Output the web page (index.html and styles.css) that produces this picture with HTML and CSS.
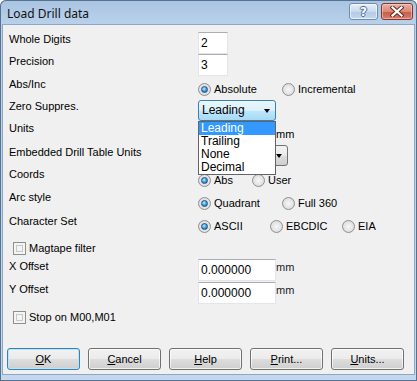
FILE: index.html
```html
<!DOCTYPE html>
<html lang="en">
<head>
    <meta charset="UTF-8">
    <title>Load Drill data</title>
    <link rel="stylesheet" href="styles.css">
</head>
<body>
    <div class="window">
        <div class="titlebar">
            <span class="title">Load Drill data</span>
            <div class="caption-btns">
                <div class="cap help">?</div>
                <div class="cap close">
                    <svg width="14" height="11" viewBox="0 0 14 11">
                        <path d="M2.5 1.5 L11.5 9.5 M11.5 1.5 L2.5 9.5" stroke="#5a2a22" stroke-width="4" stroke-linecap="square"/>
                        <path d="M2.5 1.5 L11.5 9.5 M11.5 1.5 L2.5 9.5" stroke="#fff" stroke-width="2.2" stroke-linecap="square"/>
                    </svg>
                </div>
            </div>
        </div>

        <div class="client">
            <div class="form">
                <div class="row r1">
                    <div class="lbl">Whole Digits</div>
                    <div class="tb small">2</div>
                </div>
                <div class="row r2">
                    <div class="lbl">Precision</div>
                    <div class="tb small">3</div>
                </div>
                <div class="row r3">
                    <div class="lbl">Abs/Inc</div>
                    <div class="opts">
                        <label class="opt w84"><span class="radio on"></span>Absolute</label>
                        <label class="opt"><span class="radio"></span>Incremental</label>
                    </div>
                </div>
                <div class="row r4">
                    <div class="lbl">Zero Suppres.</div>
                    <div class="combo focus">
                        <span>Leading</span>
                        <span class="arrow"></span>
                        <div class="droplist">
                            <div class="item sel">Leading</div>
                            <div class="item">Trailing</div>
                            <div class="item">None</div>
                            <div class="item">Decimal</div>
                        </div>
                    </div>
                </div>
                <div class="row r5">
                    <div class="lbl">Units</div>
                    <div class="opts shifted">
                        <label class="opt"><span class="radio"></span>mm</label>
                    </div>
                </div>
                <div class="row r6">
                    <div class="lbl">Embedded Drill Table Units</div>
                    <div class="combo wide">
                        <span class="arrow"></span>
                    </div>
                </div>
                <div class="row r7">
                    <div class="lbl">Coords</div>
                    <div class="opts">
                        <label class="opt w54"><span class="radio on"></span>Abs</label>
                        <label class="opt"><span class="radio"></span>User</label>
                    </div>
                </div>
                <div class="row r8">
                    <div class="lbl">Arc style</div>
                    <div class="opts">
                        <label class="opt w84"><span class="radio on"></span>Quadrant</label>
                        <label class="opt"><span class="radio"></span>Full 360</label>
                    </div>
                </div>
                <div class="row r9">
                    <div class="lbl">Character Set</div>
                    <div class="opts">
                        <label class="opt w72"><span class="radio on"></span>ASCII</label>
                        <label class="opt w72"><span class="radio"></span>EBCDIC</label>
                        <label class="opt"><span class="radio"></span>EIA</label>
                    </div>
                </div>
                <div class="row r10">
                    <label class="chk"><span class="box"></span>Magtape filter</label>
                </div>
                <div class="row r11">
                    <div class="lbl">X Offset</div>
                    <div class="tb offset">0.000000</div>
                    <span class="unit">mm</span>
                </div>
                <div class="row r12">
                    <div class="lbl">Y Offset</div>
                    <div class="tb offset">0.000000</div>
                    <span class="unit">mm</span>
                </div>
                <div class="row r13">
                    <label class="chk"><span class="box"></span>Stop on M00,M01</label>
                </div>
            </div>

            <div class="buttons">
                <div class="btn default"><u>O</u>K</div>
                <div class="btn"><u>C</u>ancel</div>
                <div class="btn"><u>H</u>elp</div>
                <div class="btn"><u>P</u>rint...</div>
                <div class="btn"><u>U</u>nits...</div>
            </div>
        </div>
    </div>
</body>
</html>
```

FILE: styles.css
```css
body {
    margin: 0;
    font-family: "Liberation Sans", Arial, sans-serif;
    font-size: 11px;
    color: #000;
    background: #fff;
}
.window {
    width: 417px;
    height: 381px;
    box-sizing: border-box;
    padding: 0 3px 7px 3px;
    display: flex;
    flex-direction: column;
    background: linear-gradient(#a9c4e2, #bcd3ec 30px, #c3d8ef);
    box-shadow: inset 0 0 0 1px #56728f;
    border-radius: 6px 6px 0 0;
}
.titlebar {
    height: 25px;
    display: flex;
    justify-content: space-between;
    align-items: flex-start;
    padding: 0 1px 0 4px;
}
.title {
    font-family: "Noto Sans", "Open Sans", sans-serif;
    font-size: 12px;
    color: #111;
    margin-top: 5px;
}
.caption-btns {
    display: flex;
    gap: 3px;
    margin-top: 3px;
}
.cap {
    height: 17px;
    box-sizing: border-box;
    border-radius: 3px;
    display: flex;
    align-items: center;
    justify-content: center;
}
.help {
    width: 29px;
    border: 1px solid #6f8cb0;
    background: linear-gradient(#e6eff9, #c9daee 50%, #b2c9e4 51%, #c4d8ef);
    box-shadow: inset 0 0 0 1px rgba(255,255,255,0.6);
    font-family: "DejaVu Sans", sans-serif;
    font-weight: bold;
    font-size: 12px;
    color: #fff;
    text-shadow: 1px 0 #4d6a8e, -1px 0 #4d6a8e, 0 1px #4d6a8e, 0 -1px #4d6a8e;
}
.close {
    width: 32px;
    border: 1px solid #8a3428;
    background: linear-gradient(#eab0a4, #d98777 50%, #c75a48 51%, #d3806e);
    box-shadow: inset 0 0 0 1px rgba(255,220,210,0.5);
}
.client {
    flex: 1;
    background: #f0f0f0;
    display: flex;
    flex-direction: column;
    box-shadow: 0 0 0 1px #8fa6c3;
}
.form {
    padding: 6px 0 0 6px;
}
.row {
    display: flex;
    align-items: flex-start;
}
.lbl {
    width: 189px;
    line-height: 13px;
    white-space: nowrap;
}
.r1 { height: 23px; }
.r2 { height: 23px; }
.r3 { height: 21px; }
.r4 { height: 24px; }
.r5 { height: 20px; }
.r6 { height: 25px; }
.r7 { height: 23px; }
.r8 { height: 24px; }
.r9 { height: 24px; }
.r10 { height: 20px; }
.r11 { height: 23px; }
.r12 { height: 24px; }
.r13 { height: 25px; }

.r1 .lbl { margin-top: 2px; }
.r2 .lbl { margin-top: 1px; }
.r3 .lbl { margin-top: 1px; }
.r4 .lbl { margin-top: 2px; }
.r6 .lbl { margin-top: 4px; }
.r7 .lbl, .r8 .lbl, .r9 .lbl { margin-top: 1px; }
.r11 .lbl, .r12 .lbl { margin-top: 2px; }

.r1 .tb { margin-top: 1px; }
.r3 .opts { margin-top: 6px; }
.r4 .combo { margin-top: 2px; }
.r5 .opts { margin-top: 6px; }
.r6 .combo { margin-top: 3px; }
.r7 .opts, .r8 .opts { margin-top: 7px; }
.r9 .opts { margin-top: 6px; }
.r10 .chk { margin-top: 4px; }
.r11 .tb, .r12 .tb { margin-top: 1px; }
.r13 .chk { margin-top: 6px; }

.tb {
    height: 22px;
    box-sizing: border-box;
    background: #fff;
    border: 1px solid #e3e5ea;
    border-top-color: #abadb3;
    padding: 0 2px;
    line-height: 20px;
    font-size: 12px;
}
.tb.small { width: 30px; }
.tb.offset { width: 78px; }
.unit {
    margin-top: 3px;
    line-height: 13px;
    color: #1a1a2a;
}
.opts {
    display: flex;
}
.opts.shifted {
    margin-left: 62px;
}
.opt {
    display: flex;
    align-items: center;
    gap: 3px;
    line-height: 13px;
}
.w84 { width: 84px; }
.w72 { width: 72px; }
.w54 { width: 54px; }
.radio {
    width: 13px;
    height: 13px;
    box-sizing: border-box;
    border-radius: 50%;
    border: 1px solid #8e8f8f;
    background: radial-gradient(circle, #f7f7f7 0, #e4e4e4 55%, #d2d2d2 100%);
    position: relative;
}
.radio.on::after {
    content: "";
    position: absolute;
    left: 2px;
    top: 2px;
    width: 7px;
    height: 7px;
    box-sizing: border-box;
    border-radius: 50%;
    border: 1px solid #1f4f7d;
    background: radial-gradient(circle at 40% 35%, #bfeaff 0, #4aa8e6 45%, #135a9e 100%);
}
.chk {
    display: flex;
    align-items: center;
    gap: 3px;
    line-height: 13px;
    margin-left: 4px;
}
.box {
    width: 13px;
    height: 13px;
    box-sizing: border-box;
    border: 1px solid #8e8f8f;
    background: #f4f4f4;
    box-shadow: inset 0 0 0 2px #f4f4f4, inset 0 0 0 3px #c8c8c8;
}
.combo {
    position: relative;
    width: 78px;
    height: 21px;
    box-sizing: border-box;
    border: 1px solid #707070;
    border-radius: 3px;
    background: linear-gradient(#f2f2f2, #ebebeb 50%, #dddddd 51%, #cfcfcf);
    padding-left: 3px;
    line-height: 19px;
    font-size: 12px;
}
.combo.wide { width: 90px; }
.combo.focus {
    border-color: #3c7fb1;
    background: linear-gradient(#eaf6fd, #d9f0fc 50%, #bee6fd 51%, #a7d9f5);
}
.arrow {
    position: absolute;
    right: 5px;
    top: 8px;
    border-top: 4px solid #000;
    border-left: 3.5px solid transparent;
    border-right: 3.5px solid transparent;
}
.droplist {
    position: absolute;
    left: -1px;
    top: 20px;
    width: 78px;
    box-sizing: border-box;
    border: 1px solid #646464;
    background: #fff;
    z-index: 2;
}
.item {
    height: 13px;
    line-height: 13px;
    padding-left: 2px;
    font-size: 12px;
}
.item.sel {
    background: #3399ff;
    color: #fff;
}
.buttons {
    display: flex;
    gap: 8px;
    margin: 18px 0 0 4px;
}
.btn {
    width: 73px;
    height: 22px;
    box-sizing: border-box;
    border: 1px solid #707070;
    border-radius: 3px;
    background: linear-gradient(#f2f2f2, #ebebeb 50%, #dddddd 51%, #cfcfcf);
    box-shadow: inset 0 0 0 1px rgba(255,255,255,0.7);
    text-align: center;
    line-height: 20px;
}
.btn.default {
    border-color: #3c7fb1;
    box-shadow: inset 0 0 0 1px #b6e6fc;
}
```
